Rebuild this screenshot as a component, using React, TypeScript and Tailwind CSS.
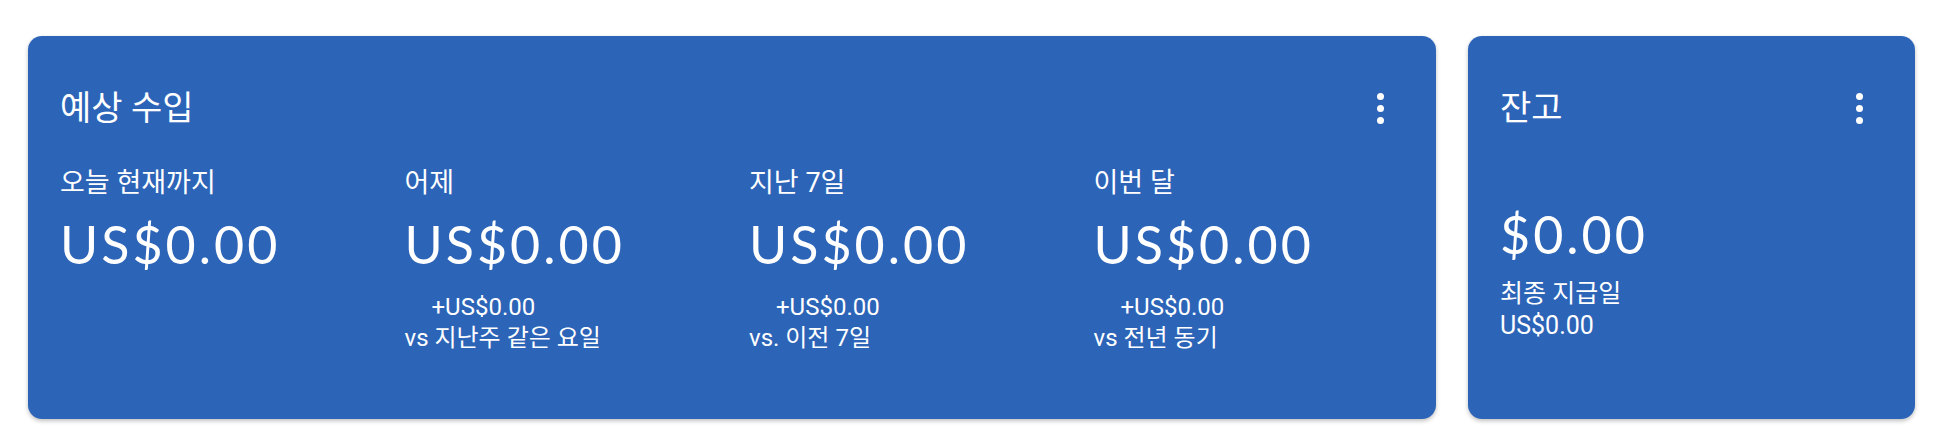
import React from 'react';

const FONT_TEXT = "font-['Roboto','Noto_Sans_CJK_KR',sans-serif]";
const FONT_BIG = "font-['Lato','Noto_Sans_CJK_KR',sans-serif]";

function MoreButton() {
  return (
    <button className="flex h-12 w-12 flex-col items-center justify-center gap-[5px]">
      <span className="block h-[7px] w-[7px] rounded-full bg-white" />
      <span className="block h-[7px] w-[7px] rounded-full bg-white" />
      <span className="block h-[7px] w-[7px] rounded-full bg-white" />
    </button>
  );
}

interface Period {
  label: string;
  value: string;
  delta?: string;
  compare?: string;
}

const periods: Period[] = [
  { label: '오늘 현재까지', value: 'US$0.00' },
  { label: '어제', value: 'US$0.00', delta: '+US$0.00', compare: 'vs 지난주 같은 요일' },
  { label: '지난 7일', value: 'US$0.00', delta: '+US$0.00', compare: 'vs. 이전 7일' },
  { label: '이번 달', value: 'US$0.00', delta: '+US$0.00', compare: 'vs 전년 동기' },
];

export default function App() {
  return (
    <div className={`flex h-[444px] w-[1948px] gap-[32px] bg-white pl-[28px] pt-[36px] text-white ${FONT_TEXT}`}>
      {/* Estimated earnings */}
      <div className="h-[383px] w-[1408px] rounded-[14px] bg-[#2c64b8] px-8 pt-[48px] shadow-[0_2px_4px_rgba(0,0,0,0.25)]">
        <div className="flex h-12 items-center justify-between">
          <h2 className="text-[34px] leading-none">예상 수입</h2>
          <MoreButton />
        </div>

        <div className="mt-[35px] grid grid-cols-4 gap-x-[34px]">
          {periods.map((p) => (
            <div key={p.label}>
              <p className="text-[27px] leading-[32px]">{p.label}</p>
              <p className={`mt-[15px] text-[52px] leading-[60px] tracking-[3px] ${FONT_BIG}`}>{p.value}</p>
              {p.delta && (
                <div className="mt-[18px] text-[24px] leading-[31px]">
                  <p className="pl-[27px]">{p.delta}</p>
                  <p>{p.compare}</p>
                </div>
              )}
            </div>
          ))}
        </div>
      </div>

      {/* Balance */}
      <div className="h-[383px] w-[447px] rounded-[14px] bg-[#2c64b8] px-8 pt-[48px] shadow-[0_2px_4px_rgba(0,0,0,0.25)]">
        <div className="flex h-12 items-center justify-between">
          <h2 className="text-[34px] leading-none">잔고</h2>
          <MoreButton />
        </div>
        <p className={`mt-[72px] text-[52px] leading-[60px] tracking-[3px] ${FONT_BIG}`}>$0.00</p>
        <div className="mt-[14px] text-[25px] leading-[32px]">
          <p>최종 지급일</p>
          <p>US$0.00</p>
        </div>
      </div>
    </div>
  );
}
